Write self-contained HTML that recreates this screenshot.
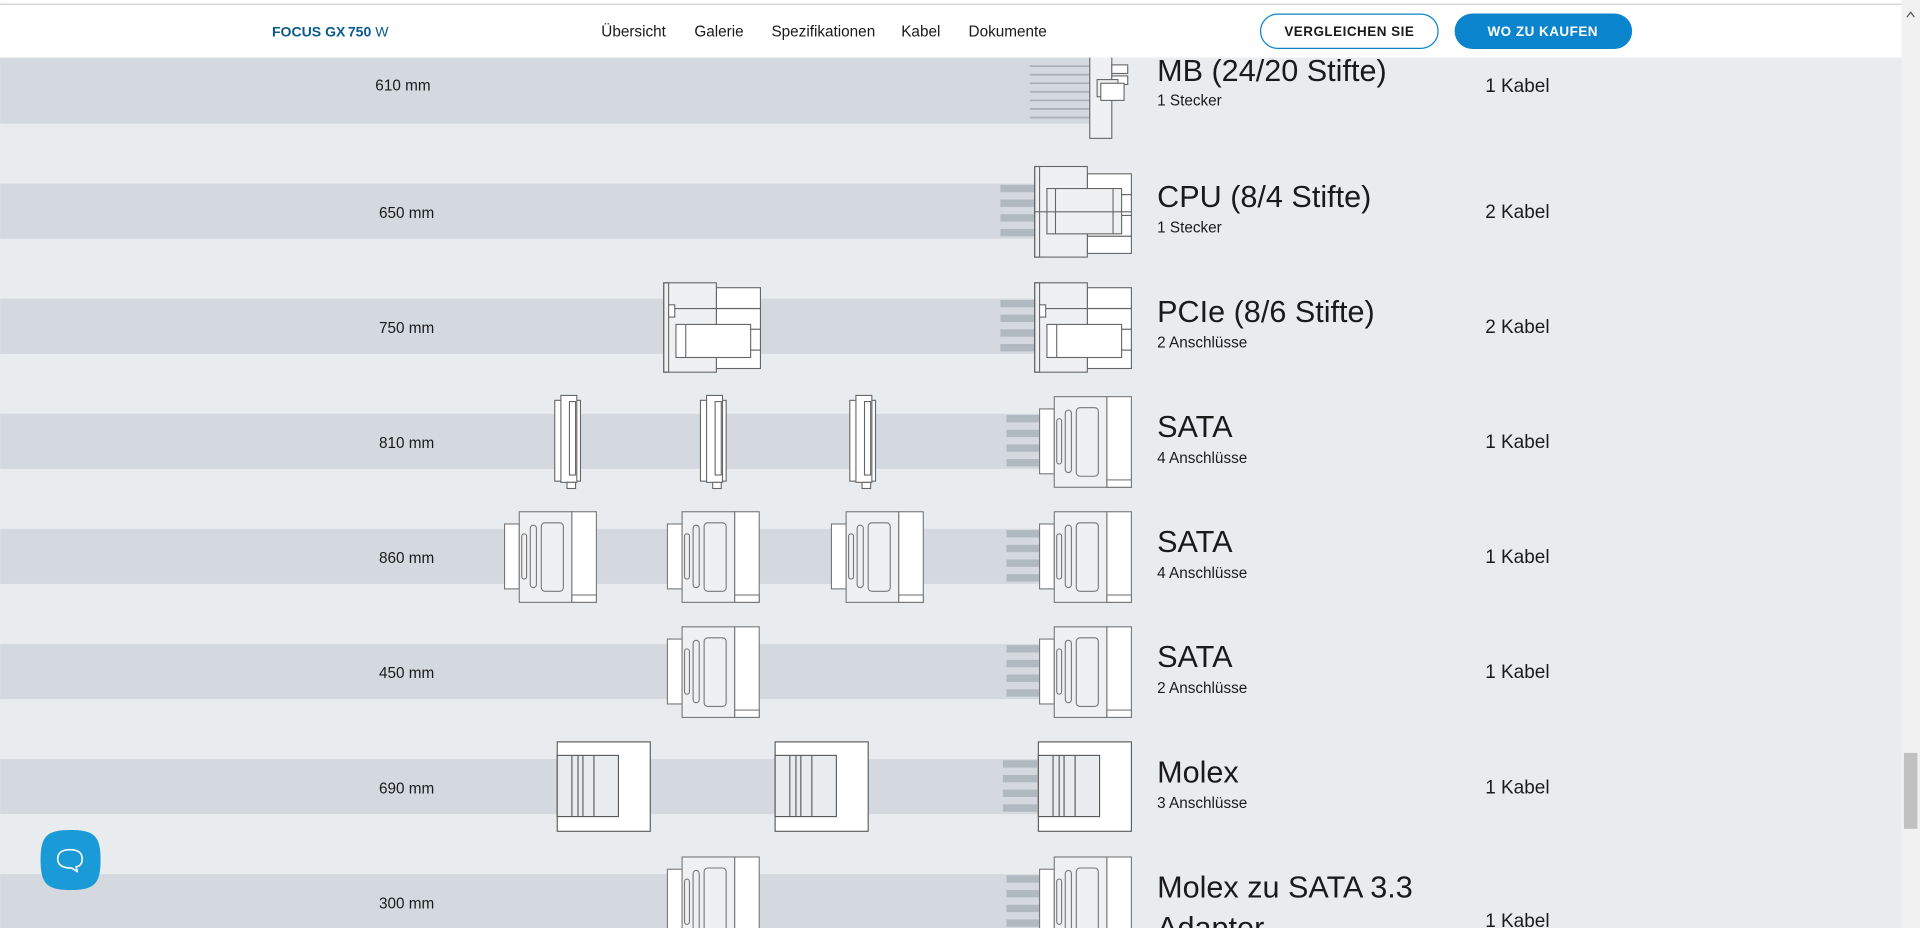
<!DOCTYPE html>
<html><head><meta charset="utf-8"><style>
html,body{margin:0;padding:0;width:1920px;height:928px;overflow:hidden;background:#e9ecef}
svg{display:block}
text{font-family:"Liberation Sans",sans-serif;fill:#1a1a1a}
</style></head><body>
<svg width="1920" height="928" viewBox="0 0 1568 758" xmlns="http://www.w3.org/2000/svg">
<defs>
<g id="stub"><rect x="0" y="-22" width="28" height="6" fill="#b0b8c0"/><rect x="0" y="-10" width="28" height="6" fill="#b0b8c0"/><rect x="0" y="2" width="28" height="6" fill="#b0b8c0"/><rect x="0" y="14" width="28" height="6" fill="#b0b8c0"/></g>
<g id="sata" stroke="#777" stroke-width="0.9">
<rect x="0" y="10" width="12" height="53" fill="#fff"/>
<rect x="12" y="0" width="43" height="74" fill="#eef0f2"/>
<rect x="55" y="0" width="20" height="74" fill="#fff"/>
<rect x="55" y="68" width="20" height="6" fill="#fff"/>
<rect x="14" y="18" width="4" height="37" rx="2" fill="none"/>
<rect x="21" y="11" width="5" height="51" rx="2.5" fill="none"/>
<rect x="30" y="9" width="18" height="56" rx="3" fill="none"/>
</g>
<g id="thin" stroke="#666" stroke-width="0.9" fill="#fff">
<rect x="0" y="4" width="21" height="66"/>
<rect x="5" y="0" width="13" height="71"/>
<rect x="12" y="5" width="5" height="60"/>
<rect x="10" y="71" width="7" height="5"/>
</g>
<g id="molex" stroke="#555" stroke-width="0.9">
<rect x="0" y="0" width="76" height="73" fill="#fff"/>
<rect x="0" y="11" width="50" height="50" fill="#e9ecef"/>
<line x1="12" y1="11" x2="12" y2="61"/><line x1="17" y1="11" x2="17" y2="61"/><line x1="21" y1="11" x2="21" y2="61"/><line x1="30" y1="11" x2="30" y2="61"/>
</g>
<g id="pcie" stroke="#666" stroke-width="0.9">
<rect x="43" y="4" width="36" height="17" fill="#fff"/>
<rect x="43" y="21" width="36" height="17" fill="#fff"/>
<rect x="43" y="38" width="36" height="17" fill="#fff"/>
<rect x="43" y="55" width="36" height="15" fill="#fff"/>
<rect x="0" y="0" width="43" height="73" fill="#eef0f2"/>
<rect x="0" y="0" width="4" height="73" fill="none"/>
<rect x="4" y="18" width="5" height="10" fill="#fff"/>
<line x1="9" y1="21" x2="79" y2="21"/>
<rect x="10" y="34" width="61" height="27" fill="#fff"/>
<line x1="18" y1="34" x2="18" y2="61"/>
</g>
<g id="cpu" stroke="#666" stroke-width="0.9">
<rect x="43" y="6" width="36" height="17" fill="#fff"/>
<rect x="43" y="23" width="36" height="17" fill="#fff"/>
<rect x="43" y="40" width="36" height="17" fill="#fff"/>
<rect x="43" y="57" width="36" height="14" fill="#fff"/>
<rect x="0" y="0" width="43" height="74" fill="#eef0f2"/>
<rect x="0" y="0" width="4" height="74" fill="none"/>
<rect x="10" y="18" width="61" height="37" fill="#eef0f2"/>
<line x1="17" y1="18" x2="17" y2="55"/><line x1="64" y1="18" x2="64" y2="55"/><line x1="0" y1="37" x2="79" y2="37"/>
</g>
</defs>
<rect width="1568" height="758" fill="#e9ecef"/>
<!-- bands -->
<rect x="0" y="47" width="890" height="54" fill="#d3d9df"/>
<rect x="0" y="150" width="850" height="45" fill="#d3d9df"/>
<rect x="0" y="244" width="850" height="45" fill="#d3d9df"/>
<rect x="0" y="338" width="850" height="45" fill="#d3d9df"/>
<rect x="0" y="432" width="850" height="45" fill="#d3d9df"/>
<rect x="0" y="526" width="850" height="45" fill="#d3d9df"/>
<rect x="0" y="620" width="850" height="45" fill="#d3d9df"/>
<rect x="0" y="714" width="850" height="45" fill="#d3d9df"/>
<!-- MB -->
<g stroke="#a9b1b9" stroke-width="1.5">
<line x1="841" y1="54" x2="890" y2="54"/><line x1="841" y1="61" x2="890" y2="61"/><line x1="841" y1="68" x2="890" y2="68"/><line x1="841" y1="75" x2="890" y2="75"/><line x1="841" y1="82" x2="890" y2="82"/><line x1="841" y1="89" x2="890" y2="89"/><line x1="841" y1="96" x2="890" y2="96"/></g>
<g stroke="#666" stroke-width="0.9"><rect x="890" y="40" width="18" height="73" fill="#eef0f2"/><rect x="908" y="53" width="13" height="7" fill="#fff"/><rect x="908" y="62" width="13" height="7" fill="#fff"/><rect x="896" y="65" width="17" height="14" fill="#eef0f2"/><rect x="899" y="68" width="19" height="14" fill="#fff"/></g>
<!-- row connectors -->
<use href="#stub" x="817" y="173"/><use href="#cpu" x="845" y="136"/>
<use href="#pcie" x="542" y="231"/><use href="#stub" x="817" y="267"/><use href="#pcie" x="845" y="231"/>
<use href="#thin" x="453" y="323"/><use href="#thin" x="572" y="323"/><use href="#thin" x="694" y="323"/>
<use href="#stub" x="822" y="361"/><use href="#sata" x="849" y="324"/>
<use href="#sata" x="412" y="418"/><use href="#sata" x="545" y="418"/><use href="#sata" x="679" y="418"/>
<use href="#stub" x="822" y="455"/><use href="#sata" x="849" y="418"/>
<use href="#sata" x="545" y="512"/><use href="#stub" x="822" y="549"/><use href="#sata" x="849" y="512"/>
<use href="#molex" x="455" y="606"/><use href="#molex" x="633" y="606"/>
<use href="#stub" x="819" y="643"/><use href="#molex" x="848" y="606"/>
<use href="#sata" x="545" y="700"/><use href="#stub" x="822" y="737"/><use href="#sata" x="849" y="700"/>
<!-- texts -->
<g font-size="12.5" text-anchor="middle">
<text x="329" y="74">610 mm</text><text x="332" y="178">650 mm</text><text x="332" y="272">750 mm</text><text x="332" y="366">810 mm</text><text x="332" y="460">860 mm</text><text x="332" y="554">450 mm</text><text x="332" y="648">690 mm</text><text x="332" y="742">300 mm</text>
</g>
<g font-size="15.5">
<text x="1213" y="75">1 Kabel</text><text x="1213" y="178">2 Kabel</text><text x="1213" y="272">2 Kabel</text><text x="1213" y="366">1 Kabel</text><text x="1213" y="460">1 Kabel</text><text x="1213" y="554">1 Kabel</text><text x="1213" y="648">1 Kabel</text><text x="1213" y="757">1 Kabel</text>
</g>
<g font-size="25">
<text x="945" y="66">MB (24/20 Stifte)</text><text x="945" y="169">CPU (8/4 Stifte)</text><text x="945" y="263">PCIe (8/6 Stifte)</text><text x="945" y="357">SATA</text><text x="945" y="451">SATA</text><text x="945" y="545">SATA</text><text x="945" y="639">Molex</text><text x="945" y="733">Molex zu SATA 3.3</text><text x="945" y="766">Adapter</text>
</g>
<g font-size="12.5">
<text x="945" y="86">1 Stecker</text><text x="945" y="190">1 Stecker</text><text x="945" y="284">2 Anschlüsse</text><text x="945" y="378">4 Anschlüsse</text><text x="945" y="472">4 Anschlüsse</text><text x="945" y="566">2 Anschlüsse</text><text x="945" y="660">3 Anschlüsse</text>
</g>
<!-- header -->
<rect x="0" y="0" width="1553" height="47" fill="#fff"/>
<rect x="0" y="3" width="1553" height="1" fill="#cfcfcf"/>
<text x="222" y="30" font-size="11.5" font-weight="bold" style="fill:#0b5a8c">FOCUS GX</text>
<text x="284" y="30" font-size="11.5" style="fill:#0b5a8c"><tspan font-weight="bold">750</tspan> W</text>
<g font-size="12.5"><text x="491" y="30">Übersicht</text><text x="567" y="30">Galerie</text><text x="630" y="30">Spezifikationen</text><text x="736" y="30">Kabel</text><text x="791" y="30">Dokumente</text></g>
<rect x="1029.5" y="11.5" width="145" height="28" rx="14" fill="#fff" stroke="#0a84c6" stroke-width="1"/>
<text x="1102" y="29.5" font-size="11" font-weight="bold" text-anchor="middle" letter-spacing="0.4">VERGLEICHEN SIE</text>
<rect x="1188" y="11" width="145" height="29" rx="14.5" fill="#0a84cc"/>
<text x="1260" y="29.5" font-size="11" font-weight="bold" text-anchor="middle" letter-spacing="0.4" style="fill:#fff">WO ZU KAUFEN</text>
<!-- scrollbar -->
<rect x="1553" y="0" width="15" height="758" fill="#f1f1f1"/>
<rect x="1555" y="615" width="11" height="62" fill="#c1c1c1"/>
<path d="M1557.5 14 L1560.5 10 L1563.5 14" fill="none" stroke="#555" stroke-width="1"/>
<!-- chat -->
<path d="M57.5 678 C77 678 82 683 82 702.5 C82 722 77 727 57.5 727 C38 727 33 722 33 702.5 C33 683 38 678 57.5 678Z" fill="#1a9ad6"/>
<path d="M57 694 C64 694 67 697 67 701.5 C67 705.5 65 707.5 62 708 L63 712 L58.5 709 C50 709 47 706 47 701.5 C47 697 50 694 57 694Z" fill="none" stroke="#fff" stroke-width="1.3" stroke-linejoin="round"/>
</svg>
</body></html>
